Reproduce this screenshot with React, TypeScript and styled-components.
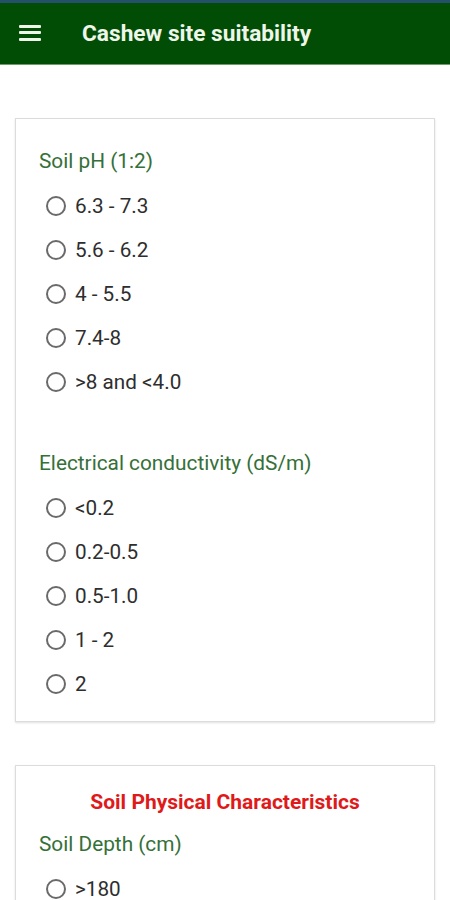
import React from 'react'
import styled, { createGlobalStyle } from 'styled-components';

const GlobalStyle = createGlobalStyle`
  body {
    margin: 0;
    background: #ffffff;
    font-family: Roboto, "Liberation Sans", sans-serif;
  }
`;

const Page = styled.div`
  width: 450px;
  height: 900px;
  overflow: hidden;
  background: #ffffff;
`;

const StatusStrip = styled.div`
  height: 3px;
  background: #24506c;
`;

const AppBar = styled.header`
  height: 62px;
  background: #024d06;
  border-bottom: 1px solid #6f9a6f;
  display: flex;
  align-items: center;
  padding-left: 19px;
  gap: 41px;
  color: #eef6ea;
  box-sizing: border-box;

  & > h1 {
    margin: 0;
    font-size: 22.7px;
    font-weight: 700;
  }
`;

const MenuButton = styled.div`
  width: 22px;
  display: flex;
  flex-direction: column;
  gap: 3.5px;
  margin-top: -2px;

  & > span {
    height: 3px;
    background: #eef6ea;
    border-radius: 1px;
  }
`;

const Content = styled.main`
  padding: 53px 15px 0;
  display: flex;
  flex-direction: column;
  gap: 43px;
`;

const Card = styled.section`
  background: #fff;
  border: 1px solid #dcdcdc;
  box-shadow: 0 1px 2px rgba(0, 0, 0, 0.12);
  padding: 18px 23px 15px;
`;

const CardTitle = styled.h2`
  margin: 6px 0 18px;
  text-align: center;
  color: #de1a1a;
  font-size: 21px;
  font-weight: 700;
  line-height: 24px;
`;

const Group = styled.div<{ first?: boolean }>`
  margin-top: ${({ first }) => (first ? "12px" : "47px")};
`;

const GroupLabel = styled.div`
  color: #357038;
  font-size: 20.8px;
  line-height: 24px;
  margin-bottom: 11px;
`;

const Option = styled.label`
  height: 44px;
  display: flex;
  align-items: center;
  gap: 9px;
  padding-left: 7px;
  font-size: 20.7px;
  color: #2e2e2e;
`;

const RadioCircle = styled.span`
  width: 20px;
  height: 20px;
  box-sizing: border-box;
  border: 2px solid #6a6a6a;
  border-radius: 50%;
  flex-shrink: 0;
`;

interface QuestionProps {
  label: string;
  options: string[];
  first?: boolean;
}

const Question = ({ label, options, first }: QuestionProps) => (
  <Group first={first}>
    <GroupLabel>{label}</GroupLabel>
    {options.map((o) => (
      <Option key={o}>
        <RadioCircle />
        {o}
      </Option>
    ))}
  </Group>
);

export default function App() {
  return (
    <Page>
      <GlobalStyle />
      <StatusStrip />
      <AppBar>
        <MenuButton>
          <span />
          <span />
          <span />
        </MenuButton>
        <h1>Cashew site suitability</h1>
      </AppBar>
      <Content>
        <Card>
          <Question
            first
            label="Soil pH (1:2)"
            options={["6.3 - 7.3", "5.6 - 6.2", "4 - 5.5", "7.4-8", ">8 and <4.0"]}
          />
          <Question
            label="Electrical conductivity (dS/m)"
            options={["<0.2", "0.2-0.5", "0.5-1.0", "1 - 2", "2"]}
          />
        </Card>
        <Card>
          <CardTitle>Soil Physical Characteristics</CardTitle>
          <Question first label="Soil Depth (cm)" options={[">180", "150-180", "100-150"]} />
        </Card>
      </Content>
    </Page>
  );
}
